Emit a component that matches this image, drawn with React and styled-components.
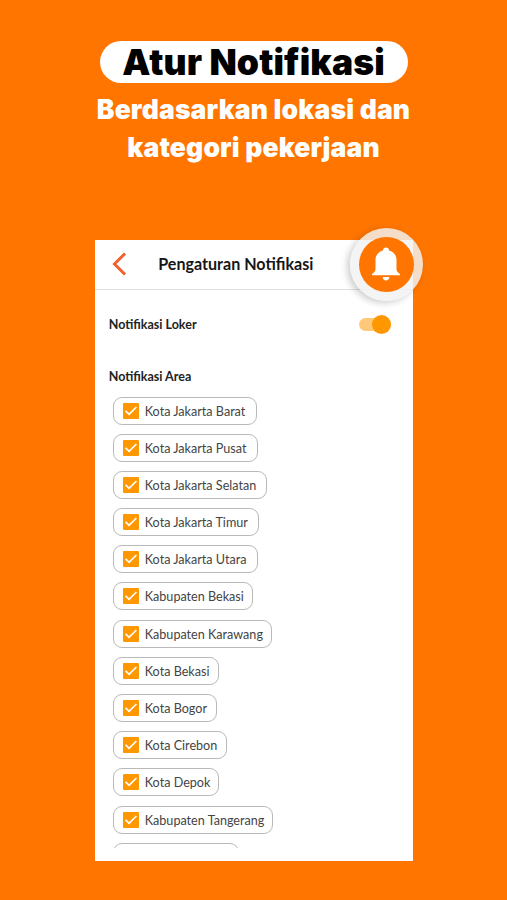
import React from 'react'
import styled, { createGlobalStyle } from 'styled-components';

const GlobalStyle = createGlobalStyle`
  body {
    margin: 0;
    background: #ff7500;
  }

  * {
    box-sizing: border-box;
  }
`;

const Page = styled.div`
  width: 507px;
  height: 900px;
  padding-top: 41px;
  display: flex;
  flex-direction: column;
  align-items: center;
  overflow: hidden;
  background: #ff7500;
`;

const Title = styled.h1`
  width: 308px;
  height: 42px;
  margin: 0;
  border-radius: 21px;
  background: white;
  color: black;
  font: 900 35.5px/44px Inter, sans-serif;
  letter-spacing: 0.1px;
  text-align: center;
  white-space: nowrap;
`;

const Subtitle = styled.p`
  margin: 7px 0 0;
  color: white;
  font: 900 26.5px/38px Inter, sans-serif;
  letter-spacing: 0.15px;
  text-align: center;
  white-space: nowrap;
`;

const Screen = styled.div`
  position: relative;
  width: 318.5px;
  height: 621.5px;
  margin: 73.5px 0 0 1px;
  background: white;
  color: #222;
  font-family: Lato, sans-serif;
`;

const Header = styled.div`
  height: 50px;
  padding: 0 0 1px 17px;
  display: flex;
  align-items: center;
  border-bottom: 1.5px solid #dfe1e3;
`;

const HeaderTitle = styled.h2`
  margin: 0 0 0 31.5px;
  color: #161616;
  font-size: 16.1px;
  font-weight: 700;
  white-space: nowrap;
`;

const Badge = styled.div`
  position: absolute;
  top: -12px;
  right: -9.5px;
  width: 73px;
  height: 73px;
  padding: 9px;
  border-radius: 50%;
  background: rgba(242, 242, 242, 0.83);
  box-shadow: -3px 2px 7px rgba(0, 0, 0, 0.2);
`;

const BadgeInner = styled.div`
  width: 55px;
  height: 55px;
  display: flex;
  align-items: center;
  justify-content: center;
  border-radius: 50%;
  background: #ff7500;
`;

const Body = styled.div`
  padding: 25px 22.5px 0 14px;
`;

const Row = styled.div`
  height: 20px;
  display: flex;
  align-items: center;
  justify-content: space-between;
`;

const Label = styled.h3`
  margin: 0;
  color: #222;
  font-size: 12.5px;
  line-height: 20px;
  font-weight: 700;
`;

const AreaLabel = styled(Label)`
  margin-top: 32px;
`;

const Track = styled.div`
  width: 32px;
  height: 13px;
  display: flex;
  align-items: center;
  justify-content: flex-end;
  border-radius: 7px;
  background: #ffc878;
`;

const Knob = styled.div`
  flex: none;
  width: 19px;
  height: 19px;
  border-radius: 50%;
  background: #ff9800;
`;

const List = styled.div`
  height: 451px;
  padding-left: 4px;
  margin-top: 10px;
  display: flex;
  flex-direction: column;
  align-items: flex-start;
  gap: 9.2px;
  overflow: hidden;
`;

const Chip = styled.div`
  flex: none;
  width: ${({ $width }) => $width}px;
  height: 28px;
  padding: 1px 0 0 9.5px;
  display: flex;
  align-items: center;
  gap: 5.5px;
  border: 1px solid #b9b9b9;
  border-radius: 9px;
  color: #444;
  font-size: 12.6px;
  white-space: nowrap;
`;

const CheckBox = styled.span`
  flex: none;
  width: 16px;
  height: 16px;
  margin-bottom: 1px;
  display: flex;
  border-radius: 1px;
  background: #ff9800;
`;

const areas = [
  { name: 'Kota Jakarta Barat', width: 144 },
  { name: 'Kota Jakarta Pusat', width: 145 },
  { name: 'Kota Jakarta Selatan', width: 154.5 },
  { name: 'Kota Jakarta Timur', width: 146.5 },
  { name: 'Kota Jakarta Utara', width: 145 },
  { name: 'Kabupaten Bekasi', width: 140.5 },
  { name: 'Kabupaten Karawang', width: 159 },
  { name: 'Kota Bekasi', width: 106.5 },
  { name: 'Kota Bogor', width: 104 },
  { name: 'Kota Cirebon', width: 114.5 },
  { name: 'Kota Depok', width: 106.5 },
  { name: 'Kabupaten Tangerang', width: 160.5 },
];

const BackIcon = () => (
  <svg width="15" height="24" viewBox="0 0 15 24" fill="none">
    <path d="M13 1.5 2.5 12 13 22.5" stroke="#f1622d" strokeWidth="3" />
  </svg>
)

const BellIcon = () => (
  <svg width="30" height="34" viewBox="0 0 30 34" fill="white">
    <path d="M15 .5c-1.800 0-3 1.200-3 2.900C7.500 4.500 4.500 8 4.500 13v9c0 2-.8 3.200-3.500 5v1.300h28V27c-2.700-1.800-3.500-3-3.500-5v-9c0-5-3-8.500-7.500-9.600C18 1.700 16.800.5 15 .5z" />
    <path d="M11.700 30h6.600c0 2-1.300 3.500-3.300 3.500s-3.300-1.500-3.300-3.500z" />
  </svg>
)

const Area = ({ name, width }) => (
  <Chip $width={width}>
    <CheckBox>
      <svg width="16" height="16" viewBox="0 0 16 16" fill="none">
        <path d="m2.600 7.800 3.500 3.500 7.300-7.300" stroke="white" strokeWidth="1.700" />
      </svg>
    </CheckBox>
    {name}
  </Chip>
)

const App = () => (
  <>
    <GlobalStyle />
    <Page>
      <Title>Atur Notifikasi</Title>
      <Subtitle>
        Berdasarkan lokasi dan
        <br />
        kategori pekerjaan
      </Subtitle>
      <Screen>
        <Header>
          <BackIcon />
          <HeaderTitle>Pengaturan Notifikasi</HeaderTitle>
        </Header>
        <Badge>
          <BadgeInner>
            <BellIcon />
          </BadgeInner>
        </Badge>
        <Body>
          <Row>
            <Label>Notifikasi Loker</Label>
            <Track>
              <Knob />
            </Track>
          </Row>
          <AreaLabel>Notifikasi Area</AreaLabel>
          <List>
            {areas.map((area) => (
              <Area key={area.name} {...area} />
            ))}
            <Chip $width={126} />
          </List>
        </Body>
      </Screen>
    </Page>
  </>
)

export default App
